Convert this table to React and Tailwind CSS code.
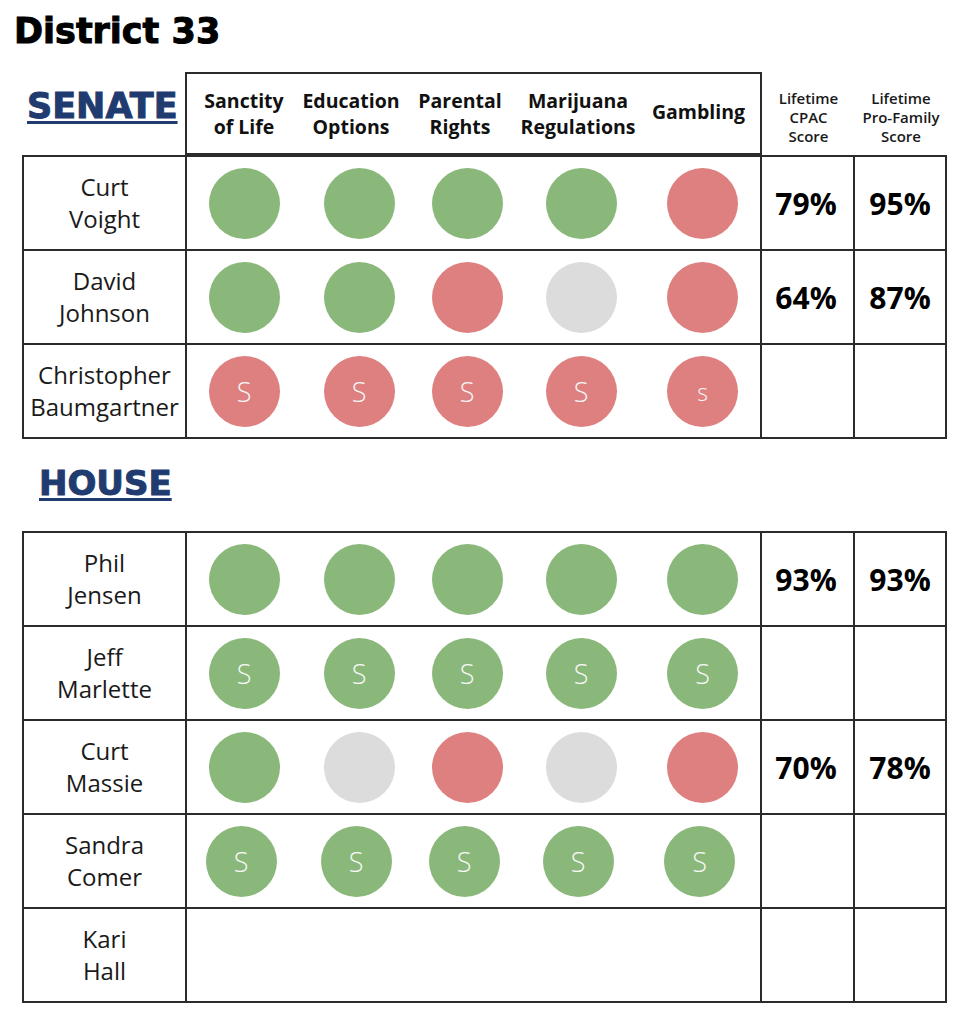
const GREEN = 'bg-[#8ab77a]';
const RED = 'bg-[#de8080]';
const GRAY = 'bg-[#dcdcdc]';

const colorFor = { g: GREEN, r: RED, n: GRAY };

const issues = [
  ['Sanctity', 'of Life'],
  ['Education', 'Options'],
  ['Parental', 'Rights'],
  ['Marijuana', 'Regulations'],
  ['Gambling'],
];

const senate = [
  { name: ['Curt', 'Voight'], votes: ['g', 'g', 'g', 'g', 'r'], cpac: '79%', family: '95%' },
  { name: ['David', 'Johnson'], votes: ['g', 'g', 'r', 'n', 'r'], cpac: '64%', family: '87%' },
  {
    name: ['Christopher', 'Baumgartner'],
    votes: ['r', 'r', 'r', 'r', 'r'],
    labels: ['S', 'S', 'S', 'S', 's'],
  },
];

const house = [
  { name: ['Phil', 'Jensen'], votes: ['g', 'g', 'g', 'g', 'g'], cpac: '93%', family: '93%' },
  { name: ['Jeff', 'Marlette'], votes: ['g', 'g', 'g', 'g', 'g'], labels: ['S', 'S', 'S', 'S', 'S'] },
  { name: ['Curt', 'Massie'], votes: ['g', 'n', 'r', 'n', 'r'], cpac: '70%', family: '78%' },
  {
    name: ['Sandra', 'Comer'],
    votes: ['g', 'g', 'g', 'g', 'g'],
    labels: ['S', 'S', 'S', 'S', 'S'],
    shift: true,
  },
  { name: ['Kari', 'Hall'], votes: [] },
];

function Dot({ vote, label }) {
  return (
    <div
      className={`w-[71px] h-[71px] rounded-full flex items-center justify-center text-[#f7f7f7] font-light ${colorFor[vote]}`}
    >
      {label === 's' ? (
        <span className="text-[23px] leading-none mt-[2px]">s</span>
      ) : label ? (
        <span className="text-[27px] leading-none">{label}</span>
      ) : null}
    </div>
  );
}

function Row({ row }) {
  return (
    <div className="flex h-[94px] border-b-2 border-[#2b2b2b]">
      <div className="w-[163px] border-r-2 border-[#2b2b2b] flex flex-col items-center justify-center text-[24px] leading-[32px] text-[#1a1a1a]">
        <span>{row.name[0]}</span>
        <span>{row.name[1]}</span>
      </div>
      <div className="w-[575px] border-r-2 border-[#2b2b2b] flex items-center">
        <div
          className={`grid grid-cols-[114px_116px_100px_128px_115px] items-center justify-items-center ${
            row.shift ? '-ml-[3px]' : ''
          }`}
        >
          {row.votes.map((v, i) => (
            <Dot key={i} vote={v} label={row.labels ? row.labels[i] : null} />
          ))}
        </div>
      </div>
      <div className="w-[93px] border-r-2 border-[#2b2b2b] flex items-center justify-center pr-[3px] text-[30px] font-bold text-black">
        {row.cpac}
      </div>
      <div className="w-[92px] border-r-2 border-[#2b2b2b] flex items-center justify-center text-[30px] font-bold text-black">
        {row.family}
      </div>
    </div>
  );
}

function Table({ rows }) {
  return (
    <div className="ml-[22px] w-[925px] border-l-2 border-t-2 border-[#2b2b2b]">
      {rows.map((r, i) => (
        <Row key={i} row={r} />
      ))}
    </div>
  );
}

function ChamberLabel({ children, className }) {
  return (
    <span
      className={`text-[#1f3b6f] font-bold underline decoration-[3px] underline-offset-[3px] leading-none [-webkit-text-stroke:1px_#1f3b6f] ${className}`}
      style={{ fontFamily: '"DejaVu Sans", sans-serif' }}
    >
      {children}
    </span>
  );
}

export default function App() {
  return (
    <div
      className="w-[967px] h-[1024px] bg-white overflow-hidden"
      style={{ fontFamily: '"Open Sans", "Liberation Sans", sans-serif' }}
    >
      <div className="h-[72px] pt-[14px] pl-[14px]">
        <h1
          className="text-[35px] leading-none font-bold text-black [-webkit-text-stroke:1px_black]"
          style={{ fontFamily: '"DejaVu Sans", sans-serif' }}
        >
          District 33
        </h1>
      </div>

      {/* Senate header */}
      <div className="flex h-[83px]">
        <div className="w-[185px] pl-[27px] pt-[17px]">
          <ChamberLabel className="text-[35px]">SENATE</ChamberLabel>
        </div>
        <div className="w-[577px] border-2 border-[#2b2b2b] grid grid-cols-[114px_100px_118px_118px_123px] items-center justify-items-center text-[19.5px] leading-[26px] font-bold text-[#111]">
          {issues.map((lines, i) => (
            <div key={i} className={`flex flex-col items-center ${lines.length === 1 ? '-mt-[4px]' : ''}`}>
              {lines.map((l) => (
                <span key={l}>{l}</span>
              ))}
            </div>
          ))}
        </div>
        <div className="w-[93px] pt-[17px] flex flex-col items-center text-[15px] leading-[19px] font-semibold text-[#1a1a1a]">
          <span>Lifetime</span>
          <span>CPAC</span>
          <span>Score</span>
        </div>
        <div className="w-[92px] pt-[17px] flex flex-col items-center text-[15px] leading-[19px] font-semibold text-[#1a1a1a]">
          <span>Lifetime</span>
          <span>Pro-Family</span>
          <span>Score</span>
        </div>
      </div>

      <Table rows={senate} />

      <div className="pl-[39px] mt-[27px] h-[33px]">
        <ChamberLabel className="text-[34px]">HOUSE</ChamberLabel>
      </div>

      <div className="mt-[32px]">
        <Table rows={house} />
      </div>
    </div>
  );
}
